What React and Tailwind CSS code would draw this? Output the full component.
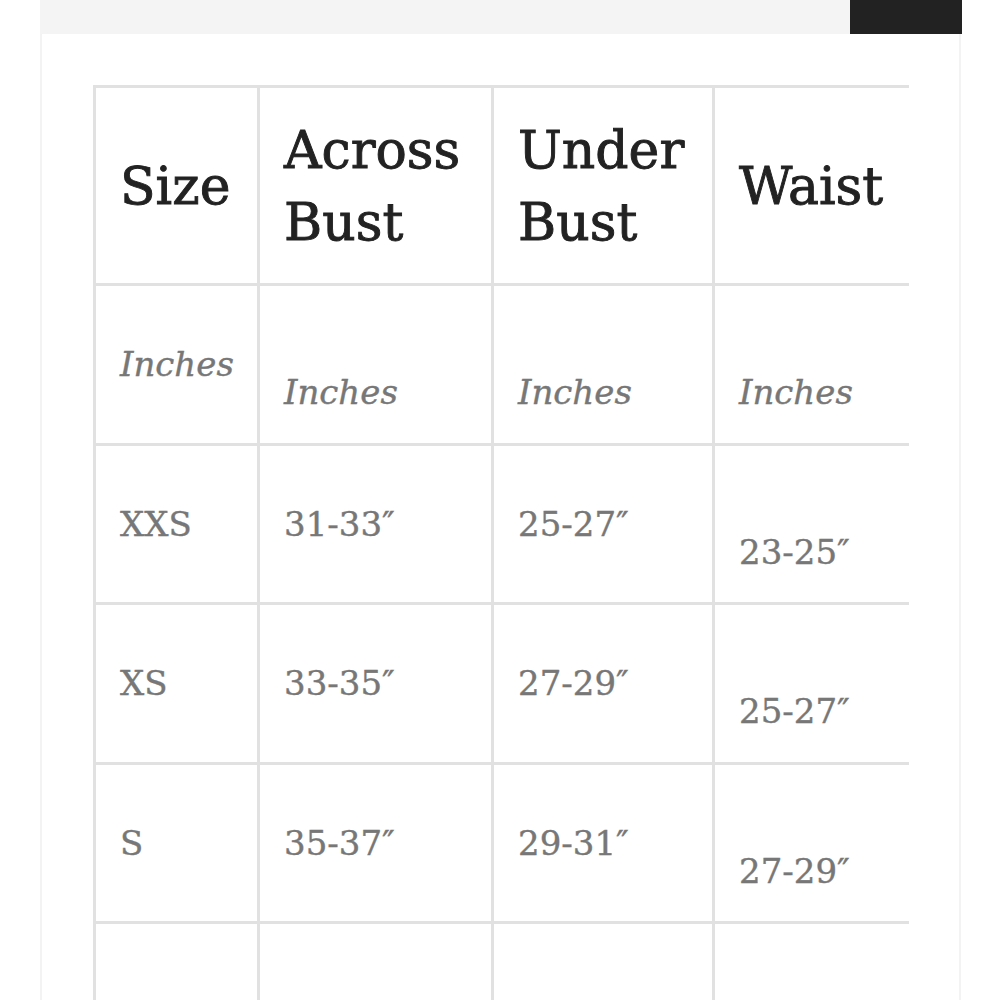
const headers = [
  { label: "Size", w: "w-[164px]" },
  { label: "Across Bust", w: "w-[234px]", lines: ["Across", "Bust"] },
  { label: "Under Bust", w: "w-[221px]", lines: ["Under", "Bust"] },
  { label: "Waist", w: "w-[300px]" },
];

const rows = [
  ["Inches", "Inches", "Inches", "Inches"],
  ["XXS", "31-33″", "25-27″", "23-25″"],
  ["XS", "33-35″", "27-29″", "25-27″"],
  ["S", "35-37″", "29-31″", "27-29″"],
  ["", "", "", ""],
];

// cells that sit lower in the reference (extra empty line above the text)
const shifted = [
  [false, true, true, true],
  [false, false, false, true],
  [false, false, false, true],
  [false, false, false, true],
  [false, false, false, false],
];

export default function App() {
  return (
    <div className="min-h-[1000px] bg-white" style={{ fontFamily: '"DejaVu Serif", serif' }}>
      <div className="ml-[40px] flex h-[34px] w-[922px]">
        <div className="flex-1 bg-[#f4f4f4]" />
        <div className="w-[112px] bg-[#222222]" />
      </div>

      <div className="ml-[40px] w-[921px] min-h-[966px] border-x-2 border-[#f3f3f3] bg-white pl-[51px] pr-[50px] pt-[51px]">
        <div className="overflow-hidden">
          <table className="w-[919px] table-fixed border-collapse">
            <thead>
              <tr className="h-[198px]">
                {headers.map((h) => (
                  <th
                    key={h.label}
                    className={`${h.w} border-[3px] border-[#e1e1e1] pl-[24px] pr-2 text-left align-middle text-[52px] font-normal leading-[72px] text-[#222222] [-webkit-text-stroke:0.9px_#222222]`}
                  >
                    {h.lines ? (
                      <>
                        <span className="block">{h.lines[0]}</span>
                        <span className="block">{h.lines[1]}</span>
                      </>
                    ) : (
                      h.label
                    )}
                  </th>
                ))}
              </tr>
            </thead>
            <tbody>
              {rows.map((row, r) => (
                <tr key={r} className="h-[159.5px]">
                  {row.map((cell, c) => (
                    <td
                      key={c}
                      className={`border-[3px] border-[#e1e1e1] pl-[24px] pr-2 align-middle text-[34px] leading-[48px] text-[#777777] [-webkit-text-stroke:0.4px_#777777] ${
                        r === 0 ? "italic" : ""
                      }`}
                    >
                      <span className={shifted[r][c] ? "block pt-[56px]" : "block"}>{cell}</span>
                    </td>
                  ))}
                </tr>
              ))}
            </tbody>
          </table>
        </div>
      </div>
    </div>
  );
}
